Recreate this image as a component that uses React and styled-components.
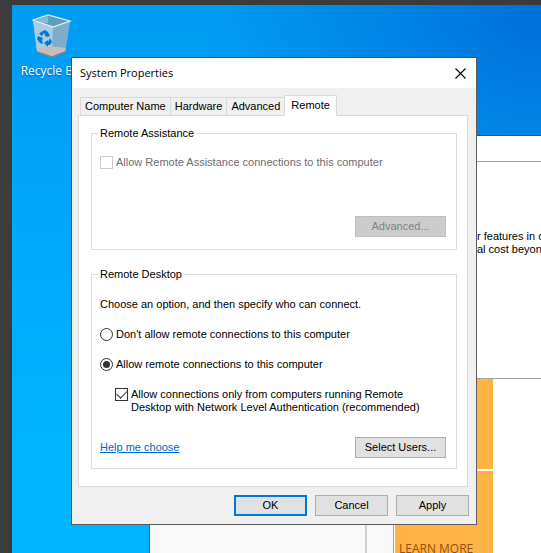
import React, { useState } from 'react';
import styled, { createGlobalStyle } from 'styled-components';

const TABS = ['Computer Name', 'Hardware', 'Advanced', 'Remote'];

const RecycleBinIcon = () => (
  <svg width="40" height="44" viewBox="0 0 40 44" aria-hidden="true">
    <path d="M1 6 L16 1 L38 7 L33 38 L20 43 L5 38 Z" fill="#8fbfdc" />
    <path d="M1 6 L16 1 L38 7 L21 13 Z" fill="#5f9cc0" />
    <path d="M4 6 L16 2 L16 9 L11 9 Z" fill="#8bb9d3" />
    <path d="M1 6 L21 13 L20 43 L5 38 Z" fill="#a5cde5" />
    <path d="M21 13 L38 7 L33 38 L20 43 Z" fill="#7fadc9" />
    <path d="M5 36 L16 32 L34 34 L33 38 L20 43 L5 38 Z" fill="#c3bfc0" />
    <path d="M5 38 L20 43 L33 38" fill="none" stroke="#857f7d" strokeWidth="1.4" />
    <path d="M1 6 L16 1 L38 7 L21 13 Z" fill="none" stroke="#e0f0f7" strokeWidth="1.2" />
    <path d="M9 18 L13 16 L16 18 L18 22 L14 23 L12 19 L10 22 L7 20 Z" fill="#0a75cf" />
    <path d="M6 22 L11 24 L10 26 L11 30 L8 29 L5 25 Z" fill="#0a75cf" />
    <path d="M18 24 L20 28 L18 31 L16 31 L16 33 L12 29 L16 26 L16 28 Z" fill="#0a75cf" />
  </svg>
);

const CloseIcon = () => (
  <svg width="11" height="11" viewBox="0 0 11 11" aria-hidden="true">
    <path d="M0.5 0.5 L10.5 10.5 M10.5 0.5 L0.5 10.5" stroke="#000" strokeWidth="1.1" fill="none" />
  </svg>
);

const App = () => {
  const [activeTab, setActiveTab] = useState('Remote');
  const [access, setAccess] = useState('allow');
  const [nla, setNla] = useState(true);

  return (
    <>
      <GlobalStyle />
      <Screen>
        <Desktop>
          <Shortcut>
            <RecycleBinIcon />
            <span>Recycle Bin</span>
          </Shortcut>

          <BackWindow>
            <BackTitle />
            <BackIntro>
              r features in o
              <br />
              al cost beyond
            </BackIntro>
            <BackBody>
              <BackList />
              <BackGutter />
              <Tiles>
                <Tile />
                <Tile $grow>LEARN MORE</Tile>
              </Tiles>
            </BackBody>
          </BackWindow>

          <Dialog role="dialog" aria-labelledby="dialog-title">
            <TitleBar>
              <Title id="dialog-title">System Properties</Title>
              <CloseButton type="button" aria-label="Close"><CloseIcon /></CloseButton>
            </TitleBar>

            <Content>
              <TabList role="tablist">
                {TABS.map(tab => (
                  <Tab
                    key={tab}
                    type="button"
                    role="tab"
                    aria-selected={activeTab === tab}
                    $active={activeTab === tab}
                    onClick={() => setActiveTab(tab)}
                  >
                    {tab}
                  </Tab>
                ))}
              </TabList>

              <Panel role="tabpanel">
                <Group>
                  <Legend>Remote Assistance</Legend>
                  <Options>
                    <Option $disabled>
                      <Checkbox type="checkbox" disabled />
                      Allow Remote Assistance connections to this computer
                    </Option>
                  </Options>
                  <AssistanceFooter>
                    <SmallButton type="button" disabled>Advanced...</SmallButton>
                  </AssistanceFooter>
                </Group>

                <Group>
                  <Legend>Remote Desktop</Legend>
                  <Options>
                    <Hint>Choose an option, and then specify who can connect.</Hint>
                    <Option>
                      <Radio
                        type="radio"
                        name="access"
                        checked={access === 'deny'}
                        onChange={() => setAccess('deny')}
                      />
                      Don't allow remote connections to this computer
                    </Option>
                    <Option>
                      <Radio
                        type="radio"
                        name="access"
                        checked={access === 'allow'}
                        onChange={() => setAccess('allow')}
                      />
                      Allow remote connections to this computer
                    </Option>
                    <Option $nested>
                      <Checkbox type="checkbox" checked={nla} onChange={() => setNla(!nla)} />
                      <span>
                        Allow connections only from computers running Remote
                        <br />
                        Desktop with Network Level Authentication (recommended)
                      </span>
                    </Option>
                  </Options>
                  <DesktopFooter>
                    <HelpLink href="#help">Help me choose</HelpLink>
                    <SmallButton type="button">Select Users...</SmallButton>
                  </DesktopFooter>
                </Group>
              </Panel>

              <Actions>
                <ActionButton type="button" $primary>OK</ActionButton>
                <ActionButton type="button">Cancel</ActionButton>
                <ActionButton type="button">Apply</ActionButton>
              </Actions>
            </Content>
          </Dialog>
        </Desktop>
      </Screen>
    </>
  );
};

export default App;

const GlobalStyle = createGlobalStyle`
  * {
    box-sizing: border-box;
  }

  body {
    margin: 0;
    color: #000;
    font-family: 'Liberation Sans', Arial, sans-serif;
    font-size: 11px;
    line-height: 13px;
  }

  button {
    font: inherit;
    color: inherit;
  }
`;

const Screen = styled.div`
  display: flex;
  min-height: 100vh;
  padding: 5px 0 0 12px;
  background: #3b3b3c;
`;

const Desktop = styled.main`
  position: relative;
  flex: 1;
  overflow: hidden;
  background:
    radial-gradient(ellipse 340px 300px at 100% 0, #0070d8, rgba(0, 120, 222, 0) 100%),
    linear-gradient(180deg, #009bf3 0, #00a2f7 120px, #00b4ff 440px);
`;

const Shortcut = styled.div`
  position: absolute;
  top: 9px;
  left: 2px;
  width: 76px;
  display: flex;
  flex-direction: column;
  align-items: center;
  gap: 5px;
  color: #fff;
  font-family: 'Open Sans', sans-serif;
  font-size: 12px;
  line-height: 16px;
  white-space: nowrap;
  text-shadow: 0 1px 2px rgba(0, 0, 0, 0.4);
`;

const BackWindow = styled.section`
  position: absolute;
  top: 130px;
  right: 0;
  bottom: 0;
  left: 137px;
  display: flex;
  flex-direction: column;
  overflow: hidden;
  background: #fff;
  border-top: 1px solid #1e5580;
  border-left: 1px solid #2e6c8e;
`;

const BackTitle = styled.div`
  flex: none;
  height: 26px;
  border-bottom: 1px solid #a5a5a5;
`;

const BackIntro = styled.p`
  flex: none;
  height: 217px;
  margin: 0;
  padding: 68px 0 0 327px;
  border-bottom: 1px solid #a5a5a5;
  white-space: nowrap;
`;

const BackBody = styled.div`
  display: flex;
  flex: 1;
`;

const BackList = styled.div`
  width: 217px;
  background: #f8f8f8;
  border-right: 2px solid #cfcfcf;
`;

const BackGutter = styled.div`
  width: 27px;
  background: #f8f8f8;
  border-right: 1px solid #a0a0a0;
`;

const Tiles = styled.div`
  display: flex;
  flex-direction: column;
  gap: 2px;
  width: 99px;
  padding-left: 1px;
`;

const Tile = styled.div`
  flex: none;
  height: ${({ $grow }) => ($grow ? '120px' : '90px')};
  padding: ${({ $grow }) => ($grow ? '70px 4px 0' : '0')};
  background: #ffb345;
  color: #94500f;
  font-family: 'Open Sans', sans-serif;
  font-size: 12px;
  line-height: 16px;
  white-space: nowrap;
`;

const Dialog = styled.section`
  position: relative;
  margin: 52px 64px 28px 59px;
  background: #f0f0f0;
  border: 1px solid #34566b;
  border-right-color: #5c5c5c;
  border-bottom-color: #5c5c5c;
`;

const TitleBar = styled.header`
  display: flex;
  align-items: center;
  justify-content: space-between;
  height: 30px;
  padding: 0 10px 0 8px;
  background: #fff;
`;

const Title = styled.h1`
  margin: 0;
  font-family: 'Open Sans', sans-serif;
  font-size: 11px;
  font-weight: 400;
  line-height: 16px;
`;

const CloseButton = styled.button`
  display: flex;
  padding: 0;
  background: none;
  border: none;
`;

const Content = styled.div`
  padding: 7px 7px 8px 6px;
`;

const TabList = styled.div`
  display: flex;
  align-items: flex-end;
  height: 21px;
  padding-left: 2px;
`;

const Tab = styled.button`
  position: relative;
  z-index: ${({ $active }) => ($active ? 1 : 0)};
  height: ${({ $active }) => ($active ? '21px' : '19px')};
  margin-right: -1px;
  padding: ${({ $active }) => ($active ? '0 6px 1px' : '0 4px')};
  background: ${({ $active }) => ($active ? '#fff' : '#f0f0f0')};
  border: 1px solid #d9d9d9;
  border-bottom-color: ${({ $active }) => ($active ? '#fff' : '#d9d9d9')};
  white-space: nowrap;
`;

const Panel = styled.div`
  display: flex;
  flex-direction: column;
  gap: 18px;
  margin: -1px 1px 8px 0;
  padding: 11px 10px 17px 12px;
  background: #fff;
  border: 1px solid #dcdcdc;
`;

const Group = styled.fieldset`
  min-width: 0;
  margin: 0;
  padding: 0 10px 0 8px;
  border: 1px solid #dcdcdc;
`;

const Legend = styled.legend`
  margin-left: -2px;
  padding: 0 2px;
`;

const Options = styled.div`
  display: flex;
  flex-direction: column;
  gap: 16px;
  padding-top: 16px;
`;

const Hint = styled.p`
  margin: 0;
  line-height: 15px;
`;

const Option = styled.label`
  display: flex;
  align-items: flex-start;
  gap: 3px;
  min-height: 14px;
  margin-left: ${({ $nested }) => ($nested ? '15px' : '0')};
  color: ${({ $disabled }) => ($disabled ? '#6d6d6d' : '#000')};
`;

const Checkbox = styled.input`
  appearance: none;
  flex: none;
  width: 13px;
  height: 13px;
  margin: 0;
  background: #fff;
  border: 1px solid #333;

  &:disabled {
    border-color: #ccc;
  }

  &:checked::before {
    content: '';
    display: block;
    width: 9px;
    height: 5px;
    margin: 1px 0 0 1px;
    border: solid #333;
    border-width: 0 0 1px 1px;
    transform: rotate(-45deg);
  }
`;

const Radio = styled.input`
  appearance: none;
  display: grid;
  place-items: center;
  flex: none;
  width: 13px;
  height: 13px;
  margin: 0;
  background: #fff;
  border: 1px solid #333;
  border-radius: 50%;

  &:checked::before {
    content: '';
    width: 7px;
    height: 7px;
    background: #333;
    border-radius: 50%;
  }
`;

const Footer = styled.div`
  display: flex;
  align-items: center;
`;

const AssistanceFooter = styled(Footer)`
  justify-content: flex-end;
  padding: 46px 0 12px;
`;

const DesktopFooter = styled(Footer)`
  justify-content: space-between;
  padding: 23px 0 10px;
`;

const HelpLink = styled.a`
  color: #0066cc;
  text-decoration: underline;
`;

const Button = styled.button`
  height: 21px;
  padding: 0;
  background: #e1e1e1;
  border: 1px solid #adadad;
  text-align: center;

  &:disabled {
    background: #ccc;
    border-color: #bfbfbf;
    color: #838383;
  }
`;

const SmallButton = styled(Button)`
  width: 91px;
`;

const ActionButton = styled(Button)`
  width: 73px;
  border: ${({ $primary }) => ($primary ? '2px solid #0078d7' : '1px solid #adadad')};
`;

const Actions = styled.footer`
  display: flex;
  justify-content: flex-end;
  gap: 8px;
`;
